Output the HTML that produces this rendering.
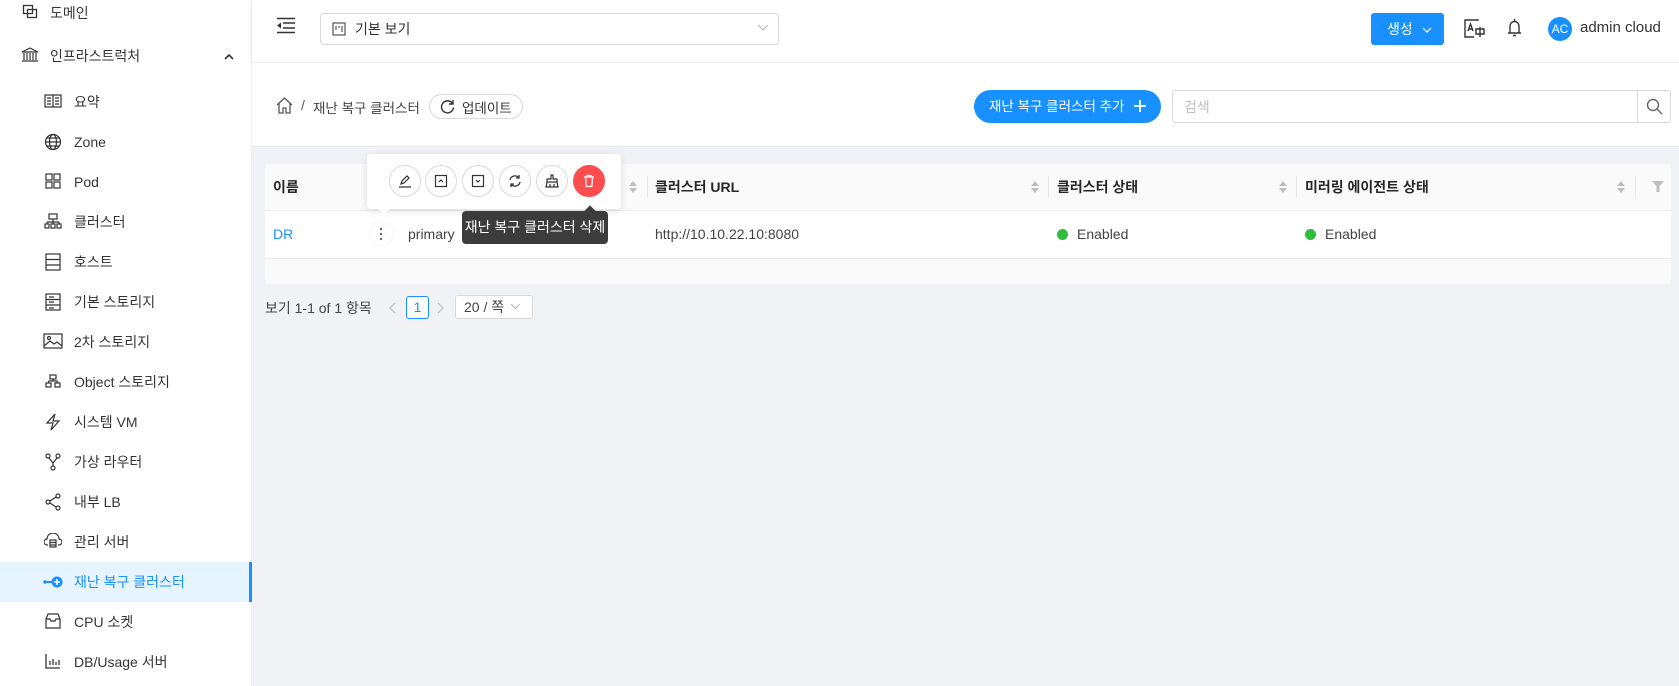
<!DOCTYPE html>
<html><head><meta charset="utf-8"><style>
*{box-sizing:border-box;margin:0;padding:0}
body{width:1679px;height:686px;overflow:hidden;background:#f0f2f5;font-family:"Liberation Sans","Noto Sans CJK KR",sans-serif;font-size:14px;color:rgba(0,0,0,.85);position:relative}
.a{position:absolute}
.side{left:0;top:0;width:252px;height:686px;background:#fff;border-right:1px solid #eee}
.it{position:absolute;left:0;width:252px;height:40px;line-height:40px;font-size:14px;color:rgba(0,0,0,.8)}
.it svg{position:absolute;top:11px}
.it span{position:absolute;left:74px}
.act{background:#e6f4ff;color:#1890ff;border-right:3px solid #1890ff}
.th{top:164px;height:46px;line-height:46px;font-weight:bold;font-size:14px;color:rgba(0,0,0,.85)}
.sort{width:8px;height:12px}
.div{width:1px;height:22px;background:#e8e8e8;top:176px}
.cb{width:32px;height:32px;border:1px solid #d9d9d9;border-radius:50%;background:#fff;top:165px}
.cb svg{position:absolute;left:8px;top:8px}
.dot{width:11px;height:11px;border-radius:50%;background:#2fbd3b;top:229px}
</style></head><body>
<div class="a side">
 <div class="it" style="top:-7px"><svg style="left:22px" width="16" height="16" viewBox="0 0 16 16" fill="none" stroke="#333" stroke-width="1.3"><rect x="1.5" y="1.5" width="9" height="8"/><rect x="5.5" y="5.5" width="9" height="8"/></svg><span style="left:50px">도메인</span></div>
 <div class="it" style="top:36px"><svg style="left:21px" width="18" height="16" viewBox="0 0 18 16" fill="none" stroke="#333" stroke-width="1.2"><path d="M1 5L9 1l8 4H1zM3 6v7M6 6v7M9 6v7M12 6v7M15 6v7M1 14h16"/></svg><span style="left:50px">인프라스트럭처</span><svg style="left:224px;top:17px" width="10" height="7" viewBox="0 0 10 7"><path d="M1 6l4-4 4 4" stroke="#333" stroke-width="1.6" fill="none"/></svg></div>
 <div class="it" style="top:82px"><svg style="left:44px" width="18" height="16" viewBox="0 0 18 16" fill="none" stroke="#333" stroke-width="1.2"><rect x="1" y="2" width="16" height="12"/><path d="M9 2v12M3 5h4M3 8h4M11 5h4M11 8h4M11 11h4M3 11h4"/></svg><span>요약</span></div>
 <div class="it" style="top:122px"><svg style="left:44px" width="18" height="18" viewBox="0 0 18 18" fill="none" stroke="#333" stroke-width="1.2"><circle cx="9" cy="9" r="7.5"/><ellipse cx="9" cy="9" rx="3.5" ry="7.5"/><path d="M1.5 9h15M3 5h12M3 13h12"/></svg><span>Zone</span></div>
 <div class="it" style="top:162px"><svg style="left:45px" width="16" height="16" viewBox="0 0 16 16" fill="none" stroke="#333" stroke-width="1.2"><rect x="1" y="1" width="6" height="6"/><rect x="9" y="1" width="6" height="6"/><rect x="1" y="9" width="6" height="6"/><rect x="9" y="9" width="6" height="6"/></svg><span>Pod</span></div>
 <div class="it" style="top:202px"><svg style="left:44px" width="18" height="16" viewBox="0 0 18 16" fill="none" stroke="#333" stroke-width="1.2"><rect x="5" y="1" width="8" height="5"/><path d="M9 6v3M3 9h12M3 9v2M9 9v2M15 9v2"/><rect x="1" y="11" width="4" height="4"/><rect x="7" y="11" width="4" height="4"/><rect x="13" y="11" width="4" height="4"/></svg><span>클러스터</span></div>
 <div class="it" style="top:242px"><svg style="left:45px" width="16" height="18" viewBox="0 0 16 18" fill="none" stroke="#333" stroke-width="1.2"><rect x="1" y="1" width="14" height="16"/><path d="M1 6.5h14M1 12h14"/></svg><span>호스트</span></div>
 <div class="it" style="top:282px"><svg style="left:45px" width="16" height="18" viewBox="0 0 16 18" fill="none" stroke="#333" stroke-width="1.2"><rect x="1" y="1" width="14" height="16"/><path d="M1 6.5h14M1 12h14M4 4h5M4 9h5M4 15h5"/></svg><span>기본 스토리지</span></div>
 <div class="it" style="top:322px"><svg style="left:43px" width="20" height="16" viewBox="0 0 20 16" fill="none" stroke="#333" stroke-width="1.2"><rect x="1" y="1" width="18" height="14"/><circle cx="6" cy="5" r="1.5"/><path d="M1 13l6-5 4 3 3-2 5 4"/></svg><span>2차 스토리지</span></div>
 <div class="it" style="top:362px"><svg style="left:45px" width="16" height="16" viewBox="0 0 16 16" fill="none" stroke="#333" stroke-width="1.2"><rect x="5" y="2" width="6" height="4"/><rect x="1" y="10" width="5" height="4"/><rect x="10" y="10" width="5" height="4"/><path d="M8 6v2M3.5 8h9M3.5 8v2M12.5 8v2"/></svg><span>Object 스토리지</span></div>
 <div class="it" style="top:402px"><svg style="left:45px" width="16" height="18" viewBox="0 0 16 18" fill="none" stroke="#333" stroke-width="1.2"><path d="M10 1L2 10h6l-2 7 8-9H8z"/></svg><span>시스템 VM</span></div>
 <div class="it" style="top:442px"><svg style="left:45px" width="16" height="18" viewBox="0 0 16 18" fill="none" stroke="#333" stroke-width="1.2"><circle cx="3" cy="3" r="2"/><circle cx="13" cy="3" r="2"/><circle cx="8" cy="15" r="2"/><path d="M4 5l4 5 4-5M8 10v3"/></svg><span>가상 라우터</span></div>
 <div class="it" style="top:482px"><svg style="left:45px" width="16" height="18" viewBox="0 0 16 18" fill="none" stroke="#333" stroke-width="1.2"><circle cx="3" cy="9" r="2"/><circle cx="13" cy="3" r="2"/><circle cx="13" cy="15" r="2"/><path d="M5 8l6-4M5 10l6 4"/></svg><span>내부 LB</span></div>
 <div class="it" style="top:522px"><svg style="left:44px" width="18" height="16" viewBox="0 0 18 16" fill="none" stroke="#333" stroke-width="1.2"><path d="M4 12H3a2 2 0 010-6 6 6 0 0112 0 2 2 0 010 6h-1"/><rect x="6" y="7" width="6" height="7"/><path d="M6 9.5h6M6 12h6"/></svg><span>관리 서버</span></div>
 <div class="it act" style="top:562px"><svg style="left:43px;top:13px" width="20" height="14" viewBox="0 0 20 14"><circle cx="2" cy="7" r="1.8" fill="#1890ff"/><path d="M3 7h6" stroke="#1890ff" stroke-width="2"/><circle cx="14" cy="7" r="5.5" fill="#1890ff"/><path d="M11 7h6M14 4v6" stroke="#fff" stroke-width="1.6"/></svg><span>재난 복구 클러스터</span></div>
 <div class="it" style="top:602px"><svg style="left:45px" width="16" height="16" viewBox="0 0 16 16" fill="none" stroke="#333" stroke-width="1.2"><path d="M3 1h10l2 5v9H1V6z"/><path d="M1 6h4l1 2h4l1-2h4"/></svg><span>CPU 소켓</span></div>
 <div class="it" style="top:642px"><svg style="left:45px" width="16" height="16" viewBox="0 0 16 16" fill="none" stroke="#333" stroke-width="1.3"><path d="M1 1v14h14M5 12V8M8 12V6M11 12V9M14 12V7"/></svg><span>DB/Usage 서버</span></div>
</div>

<div class="a" style="left:252px;top:0;width:1427px;height:62px;background:#fff;box-shadow:0 1px 4px rgba(0,0,0,.06)"></div>
<svg class="a" style="left:276px;top:17px" width="20" height="17" viewBox="0 0 20 17" fill="none" stroke="#333" stroke-width="1.6"><path d="M1 1.5h18M7 6h12M7 11h12M1 15.5h18"/><path d="M5 5.5v6L1 8.5z" fill="#333" stroke="none"/></svg>
<div class="a" style="left:320px;top:13px;width:459px;height:32px;border:1px solid #d9d9d9;border-radius:4px;background:#fff"></div>
<svg class="a" style="left:332px;top:22px" width="14" height="14" viewBox="0 0 14 14" fill="none" stroke="#555" stroke-width="1.2"><rect x="1" y="1" width="12" height="12"/><path d="M4 4v4M7 4v2M10 4v6"/></svg>
<div class="a" style="left:355px;top:19px;font-size:14px;color:#333">기본 보기</div>
<svg class="a" style="left:757px;top:24px" width="12" height="8" viewBox="0 0 12 8"><path d="M1 1l5 5 5-5" fill="none" stroke="#bbb" stroke-width="1.2"/></svg>
<div class="a" style="left:1371px;top:13px;width:73px;height:32px;background:#1890ff;border-radius:3px;color:#fff;font-size:14px;line-height:32px;padding-left:16px">생성 <svg style="margin-left:5px" width="10" height="7" viewBox="0 0 10 7"><path d="M1 1l4 4 4-4" fill="none" stroke="#fff" stroke-width="1.2"/></svg></div>
<svg class="a" style="left:1464px;top:19px" width="21" height="19" viewBox="0 0 21 19" fill="none" stroke="#333" stroke-width="1.4"><path d="M14 2V1H1v17h9"/><path d="M4 12l2.5-7L9 12M5 10h3"/><path d="M12 10h8v5h-8zM16 8v10"/></svg>
<svg class="a" style="left:1507px;top:18px" width="15" height="20" viewBox="0 0 15 20" fill="none" stroke="#333" stroke-width="1.4"><path d="M7.5 1v2M3 15V8a4.5 4.5 0 019 0v7M1 15h13M6 17.5h3"/></svg>
<div class="a" style="left:1548px;top:17px;width:24px;height:24px;border-radius:50%;background:#1890ff;color:#fff;font-size:12px;line-height:24px;text-align:center">AC</div>
<div class="a" style="left:1580px;top:19px;font-size:15px;color:#333">admin cloud</div>

<div class="a" style="left:252px;top:63px;width:1427px;height:84px;background:#fff;border-bottom:1px solid #e8e8e8"></div>
<svg class="a" style="left:276px;top:97px" width="17" height="17" viewBox="0 0 17 17" fill="none" stroke="#555" stroke-width="1.3"><path d="M1 8L8.5 1 16 8M3 6.5V16h4v-5h3v5h4V6.5"/></svg>
<div class="a" style="left:301px;top:97px;color:#555">/</div>
<div class="a" style="left:313px;top:97px;color:#444;font-size:13.5px">재난 복구 클러스터</div>
<div class="a" style="left:429px;top:94px;width:94px;height:25px;border:1px solid #d9d9d9;border-radius:13px;background:#fff"></div>
<svg class="a" style="left:440px;top:99px" width="15" height="15" viewBox="0 0 15 15" fill="none" stroke="#333" stroke-width="1.4"><path d="M12.5 4.5A6 6 0 1013.5 8.5"/><path d="M13 1v4H9"/></svg>
<div class="a" style="left:462px;top:97px;color:#333;font-size:13.5px">업데이트</div>
<div class="a" style="left:974px;top:90px;width:187px;height:33px;background:#1890ff;border-radius:17px;color:#fff;line-height:33px;padding-left:15px;font-size:13.5px">재난 복구 클러스터 추가</div>
<svg class="a" style="left:1133px;top:99px" width="14" height="14" viewBox="0 0 14 14"><path d="M7 1v12M1 7h12" stroke="#fff" stroke-width="1.8"/></svg>
<div class="a" style="left:1172px;top:90px;width:499px;height:33px;border:1px solid #d9d9d9;border-radius:3px;background:#fff"></div>
<div class="a" style="left:1637px;top:90px;width:1px;height:33px;background:#d9d9d9"></div>
<div class="a" style="left:1184px;top:97px;color:#bfbfbf">검색</div>
<svg class="a" style="left:1646px;top:98px" width="17" height="17" viewBox="0 0 17 17" fill="none" stroke="#666" stroke-width="1.4"><circle cx="7" cy="7" r="5.5"/><path d="M11 11l5 5"/></svg>

<div class="a" style="left:265px;top:164px;width:1406px;height:120px;background:#fafafa;border-radius:3px"></div>
<div class="a" style="left:265px;top:210px;width:1406px;height:49px;background:#fff;border-top:1px solid #eee;border-bottom:1px solid #eee"></div>
<div class="a th" style="left:273px">이름</div>
<div class="a th" style="left:655px">클러스터 URL</div>
<div class="a th" style="left:1057px">클러스터 상태</div>
<div class="a th" style="left:1305px">미러링 에이전트 상태</div>
<svg class="a sort" style="left:629px;top:181px" viewBox="0 0 8 12"><path d="M4 0l4 5H0zM4 12l4-5H0z" fill="#bfbfbf"/></svg>
<svg class="a sort" style="left:1031px;top:181px" viewBox="0 0 8 12"><path d="M4 0l4 5H0zM4 12l4-5H0z" fill="#bfbfbf"/></svg>
<svg class="a sort" style="left:1279px;top:181px" viewBox="0 0 8 12"><path d="M4 0l4 5H0zM4 12l4-5H0z" fill="#bfbfbf"/></svg>
<svg class="a sort" style="left:1617px;top:181px" viewBox="0 0 8 12"><path d="M4 0l4 5H0zM4 12l4-5H0z" fill="#bfbfbf"/></svg>
<div class="a div" style="left:647px"></div><div class="a div" style="left:1048px"></div><div class="a div" style="left:1296px"></div><div class="a div" style="left:1635px"></div>
<svg class="a" style="left:1652px;top:181px" width="12" height="11" viewBox="0 0 12 11"><path d="M0 0h12L7.5 5v6h-3V5z" fill="#bfbfbf"/></svg>
<div class="a" style="left:273px;top:226px;color:#1890ff">DR</div>
<div class="a" style="left:370px;top:223px;width:22px;height:22px;border-radius:50%;background:#fff;box-shadow:0 0 3px rgba(0,0,0,.08)"></div>
<svg class="a" style="left:379px;top:227px" width="4" height="14" viewBox="0 0 4 14"><circle cx="2" cy="2" r="1.2" fill="#666"/><circle cx="2" cy="7" r="1.2" fill="#666"/><circle cx="2" cy="12" r="1.2" fill="#666"/></svg>
<div class="a" style="left:408px;top:226px;color:#444">primary</div>
<div class="a" style="left:655px;top:226px;color:#444">http://10.10.22.10:8080</div>
<div class="a dot" style="left:1057px"></div><div class="a" style="left:1077px;top:226px;color:#444">Enabled</div>
<div class="a dot" style="left:1305px"></div><div class="a" style="left:1325px;top:226px;color:#444">Enabled</div>

<div class="a" style="left:367px;top:154px;width:254px;height:55px;background:#fff;border-radius:4px;box-shadow:0 2px 8px rgba(0,0,0,.12)"></div>
<div class="a" style="left:380px;top:205px;width:8px;height:8px;background:#fff;transform:rotate(45deg)"></div>
<div class="a cb" style="left:389px"><svg width="14" height="14" viewBox="0 0 14 14" fill="none" stroke="#333" stroke-width="1.2"><path d="M3 10l1-3 5-5 2 2-5 5zM1 13h12"/></svg></div>
<div class="a cb" style="left:425px"><svg width="14" height="14" viewBox="0 0 14 14" fill="none" stroke="#333" stroke-width="1.2"><rect x="1.5" y="1.5" width="11" height="11"/><path d="M5 8l2-2 2 2"/></svg></div>
<div class="a cb" style="left:462px"><svg width="14" height="14" viewBox="0 0 14 14" fill="none" stroke="#333" stroke-width="1.2"><rect x="1.5" y="1.5" width="11" height="11"/><path d="M5 6l2 2 2-2"/></svg></div>
<div class="a cb" style="left:499px"><svg width="14" height="14" viewBox="0 0 14 14" fill="none" stroke="#333" stroke-width="1.3"><path d="M2 6a5 5 0 019-2M12 8a5 5 0 01-9 2M11 1v3H8M3 13v-3h3"/></svg></div>
<div class="a cb" style="left:536px"><svg width="14" height="14" viewBox="0 0 14 14" fill="none" stroke="#333" stroke-width="1.2"><path d="M6 1h2v4h4v3H2V5h4zM2 8l-1 5h12l-1-5M5 10v3M9 10v3"/></svg></div>
<div class="a cb" style="left:573px;border-color:#ff4d4f;background:#ff4d4f"><svg width="14" height="14" viewBox="0 0 14 14" fill="none" stroke="#fff" stroke-width="1.3"><path d="M2 3h10M5 3V1.5h4V3M3.5 3l.7 9.5h5.6L10.5 3"/></svg></div>
<div class="a" style="left:586px;top:207px;width:8px;height:8px;background:#3c3c3c;transform:rotate(45deg)"></div>
<div class="a" style="left:462px;top:211px;width:146px;height:33px;background:#3c3c3c;border-radius:4px;color:#fff;font-size:14px;line-height:33px;text-align:center">재난 복구 클러스터 삭제</div>

<div class="a" style="left:265px;top:298px;color:#444">보기 1-1 of 1 항목</div>
<svg class="a" style="left:389px;top:302px" width="7" height="12" viewBox="0 0 7 12"><path d="M6 1L1 6l5 5" fill="none" stroke="#bbb" stroke-width="1.2"/></svg>
<div class="a" style="left:406px;top:296px;width:23px;height:23px;border:1px solid #1890ff;border-radius:3px;background:#fff;color:#1890ff;text-align:center;line-height:21px">1</div>
<svg class="a" style="left:437px;top:302px" width="7" height="12" viewBox="0 0 7 12"><path d="M1 1l5 5-5 5" fill="none" stroke="#bbb" stroke-width="1.2"/></svg>
<div class="a" style="left:455px;top:295px;width:78px;height:24px;border:1px solid #d9d9d9;border-radius:3px;background:#fff;color:#444;line-height:22px;padding-left:8px">20 / 쪽</div>
<svg class="a" style="left:510px;top:303px" width="11" height="7" viewBox="0 0 11 7"><path d="M1 1l4.5 4.5L10 1" fill="none" stroke="#bbb" stroke-width="1.2"/></svg>
</body></html>
